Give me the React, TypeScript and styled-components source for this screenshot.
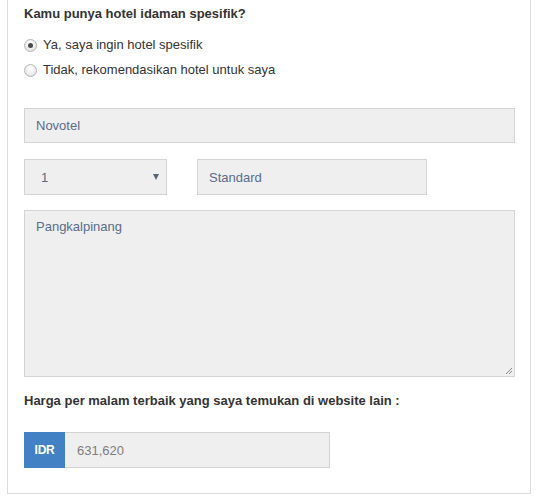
import React from "react";
import styled, { createGlobalStyle } from "styled-components";

const Global = createGlobalStyle`
  html, body { margin: 0; padding: 0; background: #fff; }
  body { font-family: "Liberation Sans", Arial, sans-serif; font-size: 13px; color: #333; }
`;

const Card = styled.div`
  box-sizing: border-box;
  width: 524px;
  margin-left: 7px;
  border: 1px solid #dcdcdc;
  border-top: none;
  padding: 5px 15px 25px 16px;
  display: flex;
  flex-direction: column;
`;

const Heading = styled.div<{ $top?: number }>`
  font-weight: bold;
  line-height: 18px;
  color: #333;
  margin-top: ${(p) => p.$top ?? 0}px;
`;

const RadioGroup = styled.div`
  display: flex;
  flex-direction: column;
  gap: 7px;
  margin-top: 13px;
`;

const RadioRow = styled.label`
  display: flex;
  align-items: center;
  line-height: 18px;
  color: #333;
  gap: 6px;
  padding-left: 0;
`;

const RadioDot = styled.span<{ $checked?: boolean }>`
  box-sizing: border-box;
  width: 13px;
  height: 13px;
  border-radius: 50%;
  border: 1px solid #b5b5b5;
  background: radial-gradient(circle at 50% 35%, #ffffff 0%, #ebebeb 60%, #d6d6d6 100%);
  display: flex;
  align-items: center;
  justify-content: center;
  &::after {
    content: "";
    display: ${(p) => (p.$checked ? "block" : "none")};
    width: 5px;
    height: 5px;
    border-radius: 50%;
    background: #4a4a4a;
  }
`;

const Field = styled.div<{ $w?: number; $h?: number; $top: number }>`
  box-sizing: border-box;
  width: ${(p) => (p.$w ? `${p.$w}px` : "100%")};
  height: ${(p) => p.$h ?? 36}px;
  margin-top: ${(p) => p.$top}px;
  background: #efefef;
  border: 1px solid #d3d3d3;
  color: #5a6c8b;
  padding: 0 11px;
  display: flex;
  align-items: center;
  position: relative;
`;

const Row = styled.div`
  display: flex;
  gap: 30px;
  margin-top: 16px;
`;

const SelectBox = styled(Field)`
  justify-content: space-between;
  padding: 0 7px 0 16px;
`;

const Arrow = styled.span`
  width: 0;
  height: 0;
  border-left: 3px solid transparent;
  border-right: 3px solid transparent;
  border-top: 6px solid #5a6472;
`;

const TextArea = styled(Field)`
  align-items: flex-start;
  padding-top: 8px;
`;

const Grip = styled.svg`
  position: absolute;
  right: 1px;
  bottom: 1px;
`;

const InputGroup = styled.div`
  display: flex;
  margin-top: 22px;
  height: 36px;
`;

const Addon = styled.div`
  width: 41px;
  background: #4281c3;
  color: #fff;
  font-weight: bold;
  font-size: 12px;
  display: flex;
  align-items: center;
  justify-content: center;
  letter-spacing: -0.3px;
`;

const GroupInput = styled.div`
  box-sizing: border-box;
  width: 265px;
  background: #efefef;
  border: 1px solid #d3d3d3;
  border-left: none;
  color: #7d7d7d;
  display: flex;
  align-items: center;
  padding-left: 12px;
  font-size: 13px;
`;

export default function App() {
  return (
    <>
      <Global />
      <Card>
        <Heading>Kamu punya hotel idaman spesifik?</Heading>
        <RadioGroup>
          <RadioRow>
            <RadioDot $checked />
            Ya, saya ingin hotel spesifik
          </RadioRow>
          <RadioRow>
            <RadioDot />
            Tidak, rekomendasikan hotel untuk saya
          </RadioRow>
        </RadioGroup>
        <Field $top={29} $h={35}>Novotel</Field>
        <Row>
          <SelectBox $w={143} $top={0}>
            1
            <Arrow />
          </SelectBox>
          <Field $w={230} $top={0}>Standard</Field>
        </Row>
        <TextArea $top={15} $h={167}>
          Pangkalpinang
          <Grip width="10" height="10" viewBox="0 0 10 10">
            <path d="M9 3 L3 9 M9 6 L6 9" stroke="#888" strokeWidth="1" />
          </Grip>
        </TextArea>
        <Heading $top={15}>Harga per malam terbaik yang saya temukan di website lain :</Heading>
        <InputGroup>
          <Addon>IDR</Addon>
          <GroupInput>631,620</GroupInput>
        </InputGroup>
      </Card>
    </>
  );
}
